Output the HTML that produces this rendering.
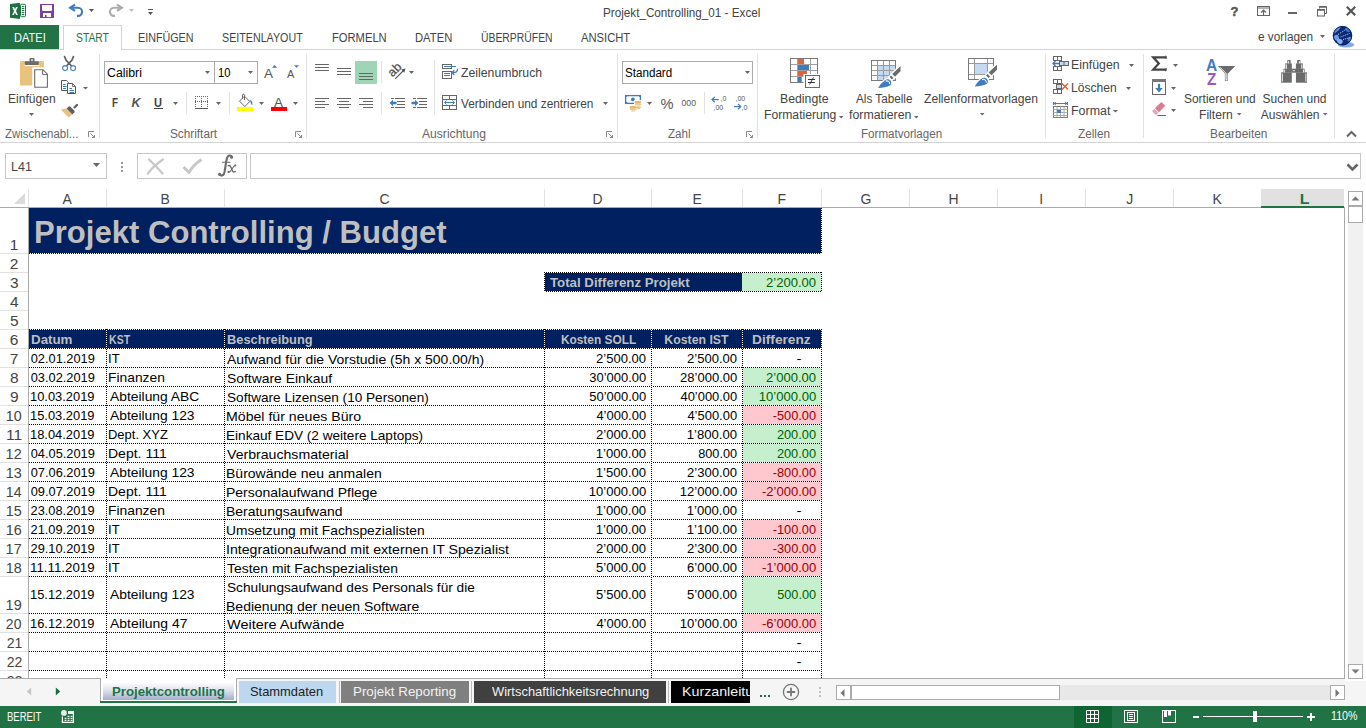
<!DOCTYPE html><html><head><meta charset="utf-8"><style>
html,body{margin:0;padding:0;width:1366px;height:728px;overflow:hidden;background:#fff;position:relative;font-family:"Liberation Sans",sans-serif;}
.t{position:absolute;white-space:nowrap;font-family:"Liberation Sans",sans-serif;}
svg{overflow:visible}
</style></head><body>
<div class="t" style="left:603.06px;top:7.00px;font-size:12px;line-height:12px;color:#444;transform:scaleX(0.9748);transform-origin:left 0;">Projekt_Controlling_01 - Excel</div>
<div style="position:absolute;left:0px;top:25px;width:59px;height:25px;background:#217346"></div>
<div class="t" style="left:13.72px;top:32.00px;font-size:12px;line-height:12px;color:#fff;transform:scaleX(0.9211);transform-origin:left 0;">DATEI</div>
<div style="position:absolute;left:63px;top:25px;width:59px;height:25px;box-sizing:border-box;border:1px solid #d4d4d4;border-bottom:none;background:#fff;z-index:2"></div>
<div class="t" style="left:75.64px;top:32.00px;font-size:12px;line-height:12px;color:#217346;transform:scaleX(0.8600);transform-origin:left 0;z-index:3">START</div>
<div class="t" style="left:137.64px;top:32.00px;font-size:12px;line-height:12px;color:#444;transform:scaleX(0.8949);transform-origin:left 0;">EINFÜGEN</div>
<div class="t" style="left:221.52px;top:32.00px;font-size:12px;line-height:12px;color:#444;transform:scaleX(0.8919);transform-origin:left 0;">SEITENLAYOUT</div>
<div class="t" style="left:331.51px;top:32.00px;font-size:12px;line-height:12px;color:#444;transform:scaleX(0.9320);transform-origin:left 0;">FORMELN</div>
<div class="t" style="left:414.60px;top:32.00px;font-size:12px;line-height:12px;color:#444;transform:scaleX(0.9362);transform-origin:left 0;">DATEN</div>
<div class="t" style="left:480.62px;top:32.00px;font-size:12px;line-height:12px;color:#444;transform:scaleX(0.8655);transform-origin:left 0;">ÜBERPRÜFEN</div>
<div class="t" style="left:581.00px;top:32.00px;font-size:12px;line-height:12px;color:#444;transform:scaleX(0.9344);transform-origin:left 0;">ANSICHT</div>
<div class="t" style="left:1257.53px;top:31.00px;font-size:12px;line-height:12px;color:#444;transform:scaleX(0.9847);transform-origin:left 0;">e vorlagen</div>
<div style="position:absolute;left:0px;top:49px;width:1366px;height:1px;background:#d4d4d4;z-index:1"></div>
<div style="position:absolute;left:0px;top:142px;width:1366px;height:1px;background:#d4d4d4"></div>
<div style="position:absolute;left:99px;top:54px;width:1px;height:84px;background:#e1e1e1"></div>
<div style="position:absolute;left:306px;top:54px;width:1px;height:84px;background:#e1e1e1"></div>
<div style="position:absolute;left:617px;top:54px;width:1px;height:84px;background:#e1e1e1"></div>
<div style="position:absolute;left:757px;top:54px;width:1px;height:84px;background:#e1e1e1"></div>
<div style="position:absolute;left:1045px;top:54px;width:1px;height:84px;background:#e1e1e1"></div>
<div style="position:absolute;left:1143px;top:54px;width:1px;height:84px;background:#e1e1e1"></div>
<div style="position:absolute;left:1334px;top:54px;width:1px;height:84px;background:#e1e1e1"></div>
<div class="t" style="left:4.66px;top:128.00px;font-size:12px;line-height:12px;color:#666;transform:scaleX(0.9562);transform-origin:left 0;">Zwischenabl...</div>
<div class="t" style="left:170.47px;top:128.00px;font-size:12px;line-height:12px;color:#666;transform:scaleX(0.9819);transform-origin:left 0;">Schriftart</div>
<div class="t" style="left:421.80px;top:128.00px;font-size:12px;line-height:12px;color:#666;transform:scaleX(1.0089);transform-origin:left 0;">Ausrichtung</div>
<div class="t" style="left:667.65px;top:128.00px;font-size:12px;line-height:12px;color:#666;transform:scaleX(0.9704);transform-origin:left 0;">Zahl</div>
<div class="t" style="left:860.57px;top:128.00px;font-size:12px;line-height:12px;color:#666;transform:scaleX(0.9657);transform-origin:left 0;">Formatvorlagen</div>
<div class="t" style="left:1078.35px;top:128.00px;font-size:12px;line-height:12px;color:#666;transform:scaleX(0.9804);transform-origin:left 0;">Zellen</div>
<div class="t" style="left:1210.05px;top:128.00px;font-size:12px;line-height:12px;color:#666;transform:scaleX(0.9886);transform-origin:left 0;">Bearbeiten</div>
<div class="t" style="left:7.53px;top:93.00px;font-size:12px;line-height:12px;color:#444;transform:scaleX(1.0074);transform-origin:left 0;">Einfügen</div>
<div class="t" style="left:460.63px;top:67.00px;font-size:12px;line-height:12px;color:#444;transform:scaleX(1.0217);transform-origin:left 0;">Zeilenumbruch</div>
<div class="t" style="left:461.00px;top:98.00px;font-size:12px;line-height:12px;color:#444;transform:scaleX(0.9874);transform-origin:left 0;">Verbinden und zentrieren</div>
<div class="t" style="left:780.42px;top:93.00px;font-size:12px;line-height:12px;color:#444;transform:scaleX(1.0240);transform-origin:left 0;">Bedingte</div>
<div class="t" style="left:763.73px;top:109.00px;font-size:12px;line-height:12px;color:#444;transform:scaleX(1.0135);transform-origin:left 0;">Formatierung</div>
<div class="t" style="left:856.00px;top:93.00px;font-size:12px;line-height:12px;color:#444;transform:scaleX(0.9773);transform-origin:left 0;">Als Tabelle</div>
<div class="t" style="left:848.88px;top:109.00px;font-size:12px;line-height:12px;color:#444;transform:scaleX(1.0281);transform-origin:left 0;">formatieren</div>
<div class="t" style="left:924.14px;top:93.00px;font-size:12px;line-height:12px;color:#444;transform:scaleX(1.0120);transform-origin:left 0;">Zellenformatvorlagen</div>
<div class="t" style="left:1071.02px;top:59.00px;font-size:12px;line-height:12px;color:#444;transform:scaleX(1.0250);transform-origin:left 0;">Einfügen</div>
<div class="t" style="left:1071.03px;top:82.00px;font-size:12px;line-height:12px;color:#444;transform:scaleX(1.0073);transform-origin:left 0;">Löschen</div>
<div class="t" style="left:1071.00px;top:105.00px;font-size:12px;line-height:12px;color:#444;transform:scaleX(1.0373);transform-origin:left 0;">Format</div>
<div class="t" style="left:1184.46px;top:93.00px;font-size:12px;line-height:12px;color:#444;transform:scaleX(0.9958);transform-origin:left 0;">Sortieren und</div>
<div class="t" style="left:1199.03px;top:109.00px;font-size:12px;line-height:12px;color:#444;transform:scaleX(1.0120);transform-origin:left 0;">Filtern</div>
<div class="t" style="left:1262.46px;top:93.00px;font-size:12px;line-height:12px;color:#444;">Suchen und</div>
<div class="t" style="left:1260.80px;top:109.00px;font-size:12px;line-height:12px;color:#444;">Auswählen</div>
<div style="position:absolute;left:104px;top:61px;width:111px;height:23px;box-sizing:border-box;border:1px solid #ababab;background:#fff"></div>
<div style="position:absolute;left:214px;top:61px;width:44px;height:23px;box-sizing:border-box;border:1px solid #ababab;background:#fff"></div>
<div class="t" style="left:106.78px;top:67.00px;font-size:12px;line-height:12px;color:#000;transform:scaleX(1.0252);transform-origin:left 0;">Calibri</div>
<div class="t" style="left:217.96px;top:67.00px;font-size:12px;line-height:12px;color:#000;transform:scaleX(0.9333);transform-origin:left 0;">10</div>
<div style="position:absolute;left:622px;top:61px;width:131px;height:23px;box-sizing:border-box;border:1px solid #ababab;background:#fff"></div>
<div class="t" style="left:624.88px;top:67.00px;font-size:12px;line-height:12px;color:#000;transform:scaleX(0.9692);transform-origin:left 0;">Standard</div>
<div style="position:absolute;left:5px;top:153px;width:102px;height:26px;box-sizing:border-box;border:1px solid #c6c6c6;background:#fff"></div>
<div class="t" style="left:11.30px;top:161.00px;font-size:12px;line-height:12px;color:#444;transform:scaleX(1.0444);transform-origin:left 0;">L41</div>
<div style="position:absolute;left:137px;top:153px;width:110px;height:26px;box-sizing:border-box;border:1px solid #c6c6c6;background:#fff"></div>
<div style="position:absolute;left:250px;top:153px;width:111px;height:26px;box-sizing:border-box;border:1px solid #c6c6c6;background:#fff;width:1111px"></div>
<div style="position:absolute;left:1261px;top:189px;width:83px;height:18px;background:#e1e1e1"></div>
<div class="t" style="left:62.35px;top:191.00px;font-size:15.5px;line-height:15.5px;color:#444;transform:scaleX(0.9000);transform-origin:5.15px 0;">A</div>
<div style="position:absolute;left:106px;top:189px;width:1px;height:18px;background:#e1e1e1"></div>
<div class="t" style="left:160.11px;top:191.00px;font-size:15.5px;line-height:15.5px;color:#444;transform:scaleX(0.9000);transform-origin:5.39px 0;">B</div>
<div style="position:absolute;left:224px;top:189px;width:1px;height:18px;background:#e1e1e1"></div>
<div class="t" style="left:378.80px;top:191.00px;font-size:15.5px;line-height:15.5px;color:#444;transform:scaleX(0.9000);transform-origin:5.70px 0;">C</div>
<div style="position:absolute;left:544px;top:189px;width:1px;height:18px;background:#e1e1e1"></div>
<div class="t" style="left:592.15px;top:191.00px;font-size:15.5px;line-height:15.5px;color:#444;transform:scaleX(0.9000);transform-origin:5.85px 0;">D</div>
<div style="position:absolute;left:651px;top:189px;width:1px;height:18px;background:#e1e1e1"></div>
<div class="t" style="left:691.54px;top:191.00px;font-size:15.5px;line-height:15.5px;color:#444;transform:scaleX(0.9000);transform-origin:5.46px 0;">E</div>
<div style="position:absolute;left:742px;top:189px;width:1px;height:18px;background:#e1e1e1"></div>
<div class="t" style="left:776.92px;top:191.00px;font-size:15.5px;line-height:15.5px;color:#444;transform:scaleX(0.9000);transform-origin:5.08px 0;">F</div>
<div style="position:absolute;left:821px;top:189px;width:1px;height:18px;background:#e1e1e1"></div>
<div class="t" style="left:859.65px;top:191.00px;font-size:15.5px;line-height:15.5px;color:#444;transform:scaleX(0.9000);transform-origin:5.85px 0;">G</div>
<div style="position:absolute;left:909px;top:189px;width:1px;height:18px;background:#e1e1e1"></div>
<div class="t" style="left:947.88px;top:191.00px;font-size:15.5px;line-height:15.5px;color:#444;transform:scaleX(0.9000);transform-origin:5.62px 0;">H</div>
<div style="position:absolute;left:997px;top:189px;width:1px;height:18px;background:#e1e1e1"></div>
<div class="t" style="left:1039.33px;top:191.00px;font-size:15.5px;line-height:15.5px;color:#444;transform:scaleX(0.9000);transform-origin:2.17px 0;">I</div>
<div style="position:absolute;left:1085px;top:189px;width:1px;height:18px;background:#e1e1e1"></div>
<div class="t" style="left:1126.05px;top:191.00px;font-size:15.5px;line-height:15.5px;color:#444;transform:scaleX(0.9000);transform-origin:3.45px 0;">J</div>
<div style="position:absolute;left:1173px;top:189px;width:1px;height:18px;background:#e1e1e1"></div>
<div class="t" style="left:1211.77px;top:191.00px;font-size:15.5px;line-height:15.5px;color:#444;transform:scaleX(0.9000);transform-origin:5.74px 0;">K</div>
<div style="position:absolute;left:1261px;top:189px;width:1px;height:18px;background:#e1e1e1"></div>
<div class="t" style="left:1300.46px;top:191.00px;font-size:15.5px;line-height:15.5px;color:#217346;font-weight:bold;transform:scaleX(1.0298);transform-origin:5.04px 0;">L</div>
<div style="position:absolute;left:0px;top:207px;width:1344px;height:1px;background:#ababab"></div>
<div style="position:absolute;left:1261px;top:206px;width:83px;height:2px;background:#217346"></div>
<svg style="position:absolute;left:14px;top:193px;" width="12" height="11" viewBox="0 0 12 11"><path d="M11 0 L11 11 L0 11 Z" fill="#dadada"/></svg>
<div style="position:absolute;left:28px;top:189px;width:1px;height:18px;background:#e1e1e1"></div>
<div style="position:absolute;left:28px;top:207px;width:1px;height:471px;background:#ababab"></div>
<div class="t" style="left:9.67px;top:237.00px;font-size:15.5px;line-height:15.5px;color:#444;">1</div>
<div style="position:absolute;left:0px;top:253px;width:28px;height:1px;background:#e1e1e1"></div>
<div class="t" style="left:9.86px;top:256.00px;font-size:15.5px;line-height:15.5px;color:#444;">2</div>
<div style="position:absolute;left:0px;top:272px;width:28px;height:1px;background:#e1e1e1"></div>
<div class="t" style="left:9.94px;top:275.00px;font-size:15.5px;line-height:15.5px;color:#444;">3</div>
<div style="position:absolute;left:0px;top:291px;width:28px;height:1px;background:#e1e1e1"></div>
<div class="t" style="left:9.94px;top:294.00px;font-size:15.5px;line-height:15.5px;color:#444;">4</div>
<div style="position:absolute;left:0px;top:310px;width:28px;height:1px;background:#e1e1e1"></div>
<div class="t" style="left:9.90px;top:313.00px;font-size:15.5px;line-height:15.5px;color:#444;">5</div>
<div style="position:absolute;left:0px;top:329px;width:28px;height:1px;background:#e1e1e1"></div>
<div class="t" style="left:9.82px;top:332.00px;font-size:15.5px;line-height:15.5px;color:#444;">6</div>
<div style="position:absolute;left:0px;top:348px;width:28px;height:1px;background:#e1e1e1"></div>
<div class="t" style="left:9.86px;top:351.00px;font-size:15.5px;line-height:15.5px;color:#444;">7</div>
<div style="position:absolute;left:0px;top:367px;width:28px;height:1px;background:#e1e1e1"></div>
<div class="t" style="left:9.90px;top:370.00px;font-size:15.5px;line-height:15.5px;color:#444;">8</div>
<div style="position:absolute;left:0px;top:386px;width:28px;height:1px;background:#e1e1e1"></div>
<div class="t" style="left:9.90px;top:389.00px;font-size:15.5px;line-height:15.5px;color:#444;">9</div>
<div style="position:absolute;left:0px;top:405px;width:28px;height:1px;background:#e1e1e1"></div>
<div class="t" style="left:5.29px;top:408.00px;font-size:15.5px;line-height:15.5px;color:#444;transform:scaleX(0.9226);transform-origin:8.91px 0;">10</div>
<div style="position:absolute;left:0px;top:424px;width:28px;height:1px;background:#e1e1e1"></div>
<div class="t" style="left:5.95px;top:427.00px;font-size:15.5px;line-height:15.5px;color:#444;transform:scaleX(1.0083);transform-origin:8.25px 0;">11</div>
<div style="position:absolute;left:0px;top:443px;width:28px;height:1px;background:#e1e1e1"></div>
<div class="t" style="left:5.36px;top:446.00px;font-size:15.5px;line-height:15.5px;color:#444;transform:scaleX(0.9319);transform-origin:8.84px 0;">12</div>
<div style="position:absolute;left:0px;top:462px;width:28px;height:1px;background:#e1e1e1"></div>
<div class="t" style="left:5.33px;top:465.00px;font-size:15.5px;line-height:15.5px;color:#444;transform:scaleX(0.9272);transform-origin:8.87px 0;">13</div>
<div style="position:absolute;left:0px;top:481px;width:28px;height:1px;background:#e1e1e1"></div>
<div class="t" style="left:5.21px;top:484.00px;font-size:15.5px;line-height:15.5px;color:#444;transform:scaleX(0.9134);transform-origin:8.99px 0;">14</div>
<div style="position:absolute;left:0px;top:500px;width:28px;height:1px;background:#e1e1e1"></div>
<div class="t" style="left:5.33px;top:503.00px;font-size:15.5px;line-height:15.5px;color:#444;transform:scaleX(0.9272);transform-origin:8.87px 0;">15</div>
<div style="position:absolute;left:0px;top:519px;width:28px;height:1px;background:#e1e1e1"></div>
<div class="t" style="left:5.33px;top:522.00px;font-size:15.5px;line-height:15.5px;color:#444;transform:scaleX(0.9272);transform-origin:8.87px 0;">16</div>
<div style="position:absolute;left:0px;top:538px;width:28px;height:1px;background:#e1e1e1"></div>
<div class="t" style="left:5.36px;top:541.00px;font-size:15.5px;line-height:15.5px;color:#444;transform:scaleX(0.9319);transform-origin:8.84px 0;">17</div>
<div style="position:absolute;left:0px;top:557px;width:28px;height:1px;background:#e1e1e1"></div>
<div class="t" style="left:5.33px;top:560.00px;font-size:15.5px;line-height:15.5px;color:#444;transform:scaleX(0.9272);transform-origin:8.87px 0;">18</div>
<div style="position:absolute;left:0px;top:576px;width:28px;height:1px;background:#e1e1e1"></div>
<div class="t" style="left:5.36px;top:597.00px;font-size:15.5px;line-height:15.5px;color:#444;transform:scaleX(0.9319);transform-origin:8.84px 0;">19</div>
<div style="position:absolute;left:0px;top:613px;width:28px;height:1px;background:#e1e1e1"></div>
<div class="t" style="left:5.48px;top:616.00px;font-size:15.5px;line-height:15.5px;color:#444;transform:scaleX(0.9001);transform-origin:8.72px 0;">20</div>
<div style="position:absolute;left:0px;top:632px;width:28px;height:1px;background:#e1e1e1"></div>
<div class="t" style="left:5.56px;top:635.00px;font-size:15.5px;line-height:15.5px;color:#444;transform:scaleX(0.9089);transform-origin:8.64px 0;">21</div>
<div style="position:absolute;left:0px;top:651px;width:28px;height:1px;background:#e1e1e1"></div>
<div class="t" style="left:5.56px;top:654.00px;font-size:15.5px;line-height:15.5px;color:#444;transform:scaleX(0.9089);transform-origin:8.64px 0;">22</div>
<div style="position:absolute;left:0px;top:670px;width:28px;height:1px;background:#e1e1e1"></div>
<div class="t" style="left:5.52px;top:673.00px;font-size:15.5px;line-height:15.5px;color:#444;transform:scaleX(0.9045);transform-origin:8.68px 0;">23</div>
<div style="position:absolute;left:1344px;top:207px;width:1px;height:472px;background:#ababab"></div>
<div style="position:absolute;left:29px;top:208px;width:792px;height:45px;background:#002060"></div>
<div style="position:absolute;left:29px;top:253px;width:793px;height:1px;background:repeating-linear-gradient(to right,#000 0,#000 1px,#fff 1px,#fff 2px)"></div>
<div style="position:absolute;left:821px;top:208px;width:1px;height:46px;background:repeating-linear-gradient(to bottom,#000 0,#000 1px,#fff 1px,#fff 2px)"></div>
<div class="t" style="left:33.68px;top:217.00px;font-size:31.5px;line-height:31.5px;color:#bfbfbf;font-weight:bold;transform:scaleX(0.9864);transform-origin:left 0;">Projekt Controlling / Budget</div>
<div style="position:absolute;left:545px;top:273px;width:197px;height:18px;background:#002060"></div>
<div style="position:absolute;left:742px;top:273px;width:79px;height:18px;background:#c6efce"></div>
<div style="position:absolute;left:544px;top:272px;width:278px;height:1px;background:repeating-linear-gradient(to right,#000 0,#000 1px,#fff 1px,#fff 2px)"></div>
<div style="position:absolute;left:544px;top:291px;width:278px;height:1px;background:repeating-linear-gradient(to right,#000 0,#000 1px,#fff 1px,#fff 2px)"></div>
<div style="position:absolute;left:544px;top:272px;width:1px;height:20px;background:repeating-linear-gradient(to bottom,#000 0,#000 1px,#fff 1px,#fff 2px)"></div>
<div style="position:absolute;left:821px;top:272px;width:1px;height:20px;background:repeating-linear-gradient(to bottom,#000 0,#000 1px,#fff 1px,#fff 2px)"></div>
<div class="t" style="left:550.27px;top:277.00px;font-size:12.8px;line-height:12.8px;color:#bfbfbf;font-weight:bold;transform:scaleX(1.0352);transform-origin:left 0;">Total Differenz Projekt</div>
<div class="t" style="left:766.97px;width:49.11px;text-align:right;top:277.00px;font-size:12.8px;line-height:12.8px;color:#006100;transform:scaleX(1.0208);transform-origin:right 0;">2’200.00</div>
<div style="position:absolute;left:29px;top:330px;width:792px;height:18px;background:#002060"></div>
<div style="position:absolute;left:29px;top:329px;width:793px;height:1px;background:repeating-linear-gradient(to right,#000 0,#000 1px,#fff 1px,#fff 2px)"></div>
<div style="position:absolute;left:29px;top:348px;width:793px;height:1px;background:repeating-linear-gradient(to right,#000 0,#000 1px,#fff 1px,#fff 2px)"></div>
<div class="t" style="left:30.83px;top:334.00px;font-size:12.8px;line-height:12.8px;color:#bfbfbf;font-weight:bold;transform:scaleX(1.0417);transform-origin:left 0;">Datum</div>
<div class="t" style="left:109.01px;top:334.00px;font-size:12.8px;line-height:12.8px;color:#bfbfbf;font-weight:bold;transform:scaleX(0.8258);transform-origin:left 0;">KST</div>
<div class="t" style="left:226.57px;top:334.00px;font-size:12.8px;line-height:12.8px;color:#bfbfbf;font-weight:bold;transform:scaleX(1.0030);transform-origin:left 0;">Beschreibung</div>
<div class="t" style="left:557.60px;top:334.00px;font-size:12.8px;line-height:12.8px;color:#bfbfbf;font-weight:bold;transform:scaleX(0.9295);transform-origin:40.80px 0;">Kosten SOLL</div>
<div class="t" style="left:663.11px;top:334.00px;font-size:12.8px;line-height:12.8px;color:#bfbfbf;font-weight:bold;transform:scaleX(0.9603);transform-origin:33.79px 0;">Kosten IST</div>
<div class="t" style="left:754.47px;top:334.00px;font-size:12.8px;line-height:12.8px;color:#bfbfbf;font-weight:bold;transform:scaleX(1.0709);transform-origin:27.58px 0;">Differenz</div>
<div class="t" style="left:30.75px;top:353.00px;font-size:12.8px;line-height:12.8px;color:#000;">02.01.2019</div>
<div class="t" style="left:108.32px;top:353.00px;font-size:12.8px;line-height:12.8px;color:#000;transform:scaleX(1.0216);transform-origin:left 0;">IT</div>
<div class="t" style="left:227.30px;top:354.00px;font-size:12.8px;line-height:12.8px;color:#000;transform:scaleX(1.0919);transform-origin:left 0;">Aufwand für die Vorstudie (5h x 500.00/h)</div>
<div class="t" style="left:596.97px;width:49.11px;text-align:right;top:353.00px;font-size:12.8px;line-height:12.8px;color:#000;transform:scaleX(1.0208);transform-origin:right 0;">2’500.00</div>
<div class="t" style="left:687.87px;width:49.11px;text-align:right;top:353.00px;font-size:12.8px;line-height:12.8px;color:#000;transform:scaleX(1.0208);transform-origin:right 0;">2’500.00</div>
<div class="t" style="left:797.09px;top:353.00px;font-size:12.8px;line-height:12.8px;color:#000;transform:scaleX(1.1875);transform-origin:2.11px 0;">-</div>
<div style="position:absolute;left:743px;top:368px;width:78px;height:18px;background:#c6efce"></div>
<div class="t" style="left:30.75px;top:372.00px;font-size:12.8px;line-height:12.8px;color:#000;">03.02.2019</div>
<div class="t" style="left:108.39px;top:372.00px;font-size:12.8px;line-height:12.8px;color:#000;transform:scaleX(1.0810);transform-origin:left 0;">Finanzen</div>
<div class="t" style="left:226.67px;top:373.00px;font-size:12.8px;line-height:12.8px;color:#000;transform:scaleX(1.0853);transform-origin:left 0;">Software Einkauf</div>
<div class="t" style="left:589.86px;width:56.23px;text-align:right;top:372.00px;font-size:12.8px;line-height:12.8px;color:#000;transform:scaleX(1.0127);transform-origin:right 0;">30’000.00</div>
<div class="t" style="left:680.76px;width:56.23px;text-align:right;top:372.00px;font-size:12.8px;line-height:12.8px;color:#000;transform:scaleX(1.0163);transform-origin:right 0;">28’000.00</div>
<div class="t" style="left:766.97px;width:49.11px;text-align:right;top:372.00px;font-size:12.8px;line-height:12.8px;color:#006100;transform:scaleX(1.0208);transform-origin:right 0;">2’000.00</div>
<div style="position:absolute;left:743px;top:387px;width:78px;height:18px;background:#c6efce"></div>
<div class="t" style="left:30.23px;top:391.00px;font-size:12.8px;line-height:12.8px;color:#000;transform:scaleX(1.0075);transform-origin:left 0;">10.03.2019</div>
<div class="t" style="left:109.50px;top:391.00px;font-size:12.8px;line-height:12.8px;color:#000;transform:scaleX(1.0823);transform-origin:left 0;">Abteilung ABC</div>
<div class="t" style="left:226.69px;top:392.00px;font-size:12.8px;line-height:12.8px;color:#000;transform:scaleX(1.0622);transform-origin:left 0;">Software Lizensen (10 Personen)</div>
<div class="t" style="left:589.86px;width:56.23px;text-align:right;top:391.00px;font-size:12.8px;line-height:12.8px;color:#000;transform:scaleX(1.0139);transform-origin:right 0;">50’000.00</div>
<div class="t" style="left:680.76px;width:56.23px;text-align:right;top:391.00px;font-size:12.8px;line-height:12.8px;color:#000;transform:scaleX(1.0092);transform-origin:right 0;">40’000.00</div>
<div class="t" style="left:759.87px;width:56.23px;text-align:right;top:391.00px;font-size:12.8px;line-height:12.8px;color:#006100;transform:scaleX(1.0222);transform-origin:right 0;">10’000.00</div>
<div style="position:absolute;left:743px;top:406px;width:78px;height:18px;background:#ffc7ce"></div>
<div class="t" style="left:30.23px;top:410.00px;font-size:12.8px;line-height:12.8px;color:#000;transform:scaleX(1.0075);transform-origin:left 0;">15.03.2019</div>
<div class="t" style="left:109.50px;top:410.00px;font-size:12.8px;line-height:12.8px;color:#000;transform:scaleX(1.0802);transform-origin:left 0;">Abteilung 123</div>
<div class="t" style="left:226.17px;top:411.00px;font-size:12.8px;line-height:12.8px;color:#000;transform:scaleX(1.1040);transform-origin:left 0;">Möbel für neues Büro</div>
<div class="t" style="left:596.97px;width:49.11px;text-align:right;top:410.00px;font-size:12.8px;line-height:12.8px;color:#000;transform:scaleX(1.0127);transform-origin:right 0;">4’000.00</div>
<div class="t" style="left:687.87px;width:49.11px;text-align:right;top:410.00px;font-size:12.8px;line-height:12.8px;color:#000;transform:scaleX(1.0127);transform-origin:right 0;">4’500.00</div>
<div class="t" style="left:772.66px;width:43.41px;text-align:right;top:410.00px;font-size:12.8px;line-height:12.8px;color:#9c0006;">-500.00</div>
<div style="position:absolute;left:743px;top:425px;width:78px;height:18px;background:#c6efce"></div>
<div class="t" style="left:30.23px;top:429.00px;font-size:12.8px;line-height:12.8px;color:#000;transform:scaleX(1.0075);transform-origin:left 0;">18.04.2019</div>
<div class="t" style="left:108.46px;top:429.00px;font-size:12.8px;line-height:12.8px;color:#000;transform:scaleX(1.0139);transform-origin:left 0;">Dept. XYZ</div>
<div class="t" style="left:226.21px;top:430.00px;font-size:12.8px;line-height:12.8px;color:#000;transform:scaleX(1.0618);transform-origin:left 0;">Einkauf EDV (2 weitere Laptops)</div>
<div class="t" style="left:596.97px;width:49.11px;text-align:right;top:429.00px;font-size:12.8px;line-height:12.8px;color:#000;transform:scaleX(1.0208);transform-origin:right 0;">2’000.00</div>
<div class="t" style="left:687.87px;width:49.11px;text-align:right;top:429.00px;font-size:12.8px;line-height:12.8px;color:#000;transform:scaleX(1.0277);transform-origin:right 0;">1’800.00</div>
<div class="t" style="left:776.88px;width:39.15px;text-align:right;top:429.00px;font-size:12.8px;line-height:12.8px;color:#006100;">200.00</div>
<div style="position:absolute;left:743px;top:444px;width:78px;height:18px;background:#c6efce"></div>
<div class="t" style="left:30.75px;top:448.00px;font-size:12.8px;line-height:12.8px;color:#000;">04.05.2019</div>
<div class="t" style="left:108.38px;top:448.00px;font-size:12.8px;line-height:12.8px;color:#000;transform:scaleX(1.0949);transform-origin:left 0;">Dept. 111</div>
<div class="t" style="left:227.30px;top:449.00px;font-size:12.8px;line-height:12.8px;color:#000;transform:scaleX(1.1032);transform-origin:left 0;">Verbrauchsmaterial</div>
<div class="t" style="left:596.97px;width:49.11px;text-align:right;top:448.00px;font-size:12.8px;line-height:12.8px;color:#000;transform:scaleX(1.0277);transform-origin:right 0;">1’000.00</div>
<div class="t" style="left:697.78px;width:39.15px;text-align:right;top:448.00px;font-size:12.8px;line-height:12.8px;color:#000;transform:scaleX(0.9946);transform-origin:right 0;">800.00</div>
<div class="t" style="left:776.88px;width:39.15px;text-align:right;top:448.00px;font-size:12.8px;line-height:12.8px;color:#006100;">200.00</div>
<div style="position:absolute;left:743px;top:463px;width:78px;height:18px;background:#ffc7ce"></div>
<div class="t" style="left:30.75px;top:467.00px;font-size:12.8px;line-height:12.8px;color:#000;">07.06.2019</div>
<div class="t" style="left:109.50px;top:467.00px;font-size:12.8px;line-height:12.8px;color:#000;transform:scaleX(1.0802);transform-origin:left 0;">Abteilung 123</div>
<div class="t" style="left:226.18px;top:468.00px;font-size:12.8px;line-height:12.8px;color:#000;transform:scaleX(1.0943);transform-origin:left 0;">Bürowände neu anmalen</div>
<div class="t" style="left:596.97px;width:49.11px;text-align:right;top:467.00px;font-size:12.8px;line-height:12.8px;color:#000;transform:scaleX(1.0277);transform-origin:right 0;">1’500.00</div>
<div class="t" style="left:687.87px;width:49.11px;text-align:right;top:467.00px;font-size:12.8px;line-height:12.8px;color:#000;transform:scaleX(1.0208);transform-origin:right 0;">2’300.00</div>
<div class="t" style="left:772.66px;width:43.41px;text-align:right;top:467.00px;font-size:12.8px;line-height:12.8px;color:#9c0006;">-800.00</div>
<div style="position:absolute;left:743px;top:482px;width:78px;height:18px;background:#ffc7ce"></div>
<div class="t" style="left:30.75px;top:486.00px;font-size:12.8px;line-height:12.8px;color:#000;">09.07.2019</div>
<div class="t" style="left:108.38px;top:486.00px;font-size:12.8px;line-height:12.8px;color:#000;transform:scaleX(1.0949);transform-origin:left 0;">Dept. 111</div>
<div class="t" style="left:226.18px;top:487.00px;font-size:12.8px;line-height:12.8px;color:#000;transform:scaleX(1.0903);transform-origin:left 0;">Personalaufwand Pflege</div>
<div class="t" style="left:589.87px;width:56.23px;text-align:right;top:486.00px;font-size:12.8px;line-height:12.8px;color:#000;transform:scaleX(1.0222);transform-origin:right 0;">10’000.00</div>
<div class="t" style="left:680.77px;width:56.23px;text-align:right;top:486.00px;font-size:12.8px;line-height:12.8px;color:#000;transform:scaleX(1.0222);transform-origin:right 0;">12’000.00</div>
<div class="t" style="left:762.68px;width:53.38px;text-align:right;top:486.00px;font-size:12.8px;line-height:12.8px;color:#9c0006;transform:scaleX(1.0207);transform-origin:right 0;">-2’000.00</div>
<div class="t" style="left:30.56px;top:505.00px;font-size:12.8px;line-height:12.8px;color:#000;">23.08.2019</div>
<div class="t" style="left:108.39px;top:505.00px;font-size:12.8px;line-height:12.8px;color:#000;transform:scaleX(1.0810);transform-origin:left 0;">Finanzen</div>
<div class="t" style="left:226.18px;top:506.00px;font-size:12.8px;line-height:12.8px;color:#000;transform:scaleX(1.0909);transform-origin:left 0;">Beratungsaufwand</div>
<div class="t" style="left:596.97px;width:49.11px;text-align:right;top:505.00px;font-size:12.8px;line-height:12.8px;color:#000;transform:scaleX(1.0277);transform-origin:right 0;">1’000.00</div>
<div class="t" style="left:687.87px;width:49.11px;text-align:right;top:505.00px;font-size:12.8px;line-height:12.8px;color:#000;transform:scaleX(1.0277);transform-origin:right 0;">1’000.00</div>
<div class="t" style="left:797.09px;top:505.00px;font-size:12.8px;line-height:12.8px;color:#000;transform:scaleX(1.1875);transform-origin:2.11px 0;">-</div>
<div style="position:absolute;left:743px;top:520px;width:78px;height:18px;background:#ffc7ce"></div>
<div class="t" style="left:30.56px;top:524.00px;font-size:12.8px;line-height:12.8px;color:#000;">21.09.2019</div>
<div class="t" style="left:108.32px;top:524.00px;font-size:12.8px;line-height:12.8px;color:#000;transform:scaleX(1.0216);transform-origin:left 0;">IT</div>
<div class="t" style="left:226.26px;top:525.00px;font-size:12.8px;line-height:12.8px;color:#000;transform:scaleX(1.0782);transform-origin:left 0;">Umsetzung mit Fachspezialisten</div>
<div class="t" style="left:596.97px;width:49.11px;text-align:right;top:524.00px;font-size:12.8px;line-height:12.8px;color:#000;transform:scaleX(1.0277);transform-origin:right 0;">1’000.00</div>
<div class="t" style="left:687.87px;width:49.11px;text-align:right;top:524.00px;font-size:12.8px;line-height:12.8px;color:#000;transform:scaleX(1.0277);transform-origin:right 0;">1’100.00</div>
<div class="t" style="left:772.66px;width:43.41px;text-align:right;top:524.00px;font-size:12.8px;line-height:12.8px;color:#9c0006;">-100.00</div>
<div style="position:absolute;left:743px;top:539px;width:78px;height:18px;background:#ffc7ce"></div>
<div class="t" style="left:30.56px;top:543.00px;font-size:12.8px;line-height:12.8px;color:#000;">29.10.2019</div>
<div class="t" style="left:108.32px;top:543.00px;font-size:12.8px;line-height:12.8px;color:#000;transform:scaleX(1.0216);transform-origin:left 0;">IT</div>
<div class="t" style="left:226.03px;top:544.00px;font-size:12.8px;line-height:12.8px;color:#000;transform:scaleX(1.1063);transform-origin:left 0;">Integrationaufwand mit externen IT Spezialist</div>
<div class="t" style="left:596.97px;width:49.11px;text-align:right;top:543.00px;font-size:12.8px;line-height:12.8px;color:#000;transform:scaleX(1.0208);transform-origin:right 0;">2’000.00</div>
<div class="t" style="left:687.87px;width:49.11px;text-align:right;top:543.00px;font-size:12.8px;line-height:12.8px;color:#000;transform:scaleX(1.0208);transform-origin:right 0;">2’300.00</div>
<div class="t" style="left:772.66px;width:43.41px;text-align:right;top:543.00px;font-size:12.8px;line-height:12.8px;color:#9c0006;">-300.00</div>
<div style="position:absolute;left:743px;top:558px;width:78px;height:18px;background:#ffc7ce"></div>
<div class="t" style="left:30.20px;top:562.00px;font-size:12.8px;line-height:12.8px;color:#000;transform:scaleX(1.0395);transform-origin:left 0;">11.11.2019</div>
<div class="t" style="left:108.32px;top:562.00px;font-size:12.8px;line-height:12.8px;color:#000;transform:scaleX(1.0216);transform-origin:left 0;">IT</div>
<div class="t" style="left:227.02px;top:563.00px;font-size:12.8px;line-height:12.8px;color:#000;transform:scaleX(1.0880);transform-origin:left 0;">Testen mit Fachspezialisten</div>
<div class="t" style="left:596.97px;width:49.11px;text-align:right;top:562.00px;font-size:12.8px;line-height:12.8px;color:#000;transform:scaleX(1.0181);transform-origin:right 0;">5’000.00</div>
<div class="t" style="left:687.87px;width:49.11px;text-align:right;top:562.00px;font-size:12.8px;line-height:12.8px;color:#000;transform:scaleX(1.0208);transform-origin:right 0;">6’000.00</div>
<div class="t" style="left:762.68px;width:53.38px;text-align:right;top:562.00px;font-size:12.8px;line-height:12.8px;color:#9c0006;transform:scaleX(1.0207);transform-origin:right 0;">-1’000.00</div>
<div style="position:absolute;left:743px;top:577px;width:78px;height:36px;background:#c6efce"></div>
<div class="t" style="left:30.23px;top:589.00px;font-size:12.8px;line-height:12.8px;color:#000;transform:scaleX(1.0075);transform-origin:left 0;">15.12.2019</div>
<div class="t" style="left:109.50px;top:589.00px;font-size:12.8px;line-height:12.8px;color:#000;transform:scaleX(1.0802);transform-origin:left 0;">Abteilung 123</div>
<div class="t" style="left:596.97px;width:49.11px;text-align:right;top:589.00px;font-size:12.8px;line-height:12.8px;color:#000;transform:scaleX(1.0181);transform-origin:right 0;">5’500.00</div>
<div class="t" style="left:687.87px;width:49.11px;text-align:right;top:589.00px;font-size:12.8px;line-height:12.8px;color:#000;transform:scaleX(1.0181);transform-origin:right 0;">5’000.00</div>
<div class="t" style="left:776.88px;width:39.15px;text-align:right;top:589.00px;font-size:12.8px;line-height:12.8px;color:#006100;transform:scaleX(0.9946);transform-origin:right 0;">500.00</div>
<div style="position:absolute;left:743px;top:614px;width:78px;height:18px;background:#ffc7ce"></div>
<div class="t" style="left:30.23px;top:618.00px;font-size:12.8px;line-height:12.8px;color:#000;transform:scaleX(1.0075);transform-origin:left 0;">16.12.2019</div>
<div class="t" style="left:109.50px;top:618.00px;font-size:12.8px;line-height:12.8px;color:#000;transform:scaleX(1.0879);transform-origin:left 0;">Abteilung 47</div>
<div class="t" style="left:227.30px;top:619.00px;font-size:12.8px;line-height:12.8px;color:#000;transform:scaleX(1.1319);transform-origin:left 0;">Weitere Aufwände</div>
<div class="t" style="left:596.97px;width:49.11px;text-align:right;top:618.00px;font-size:12.8px;line-height:12.8px;color:#000;transform:scaleX(1.0127);transform-origin:right 0;">4’000.00</div>
<div class="t" style="left:680.77px;width:56.23px;text-align:right;top:618.00px;font-size:12.8px;line-height:12.8px;color:#000;transform:scaleX(1.0222);transform-origin:right 0;">10’000.00</div>
<div class="t" style="left:762.68px;width:53.38px;text-align:right;top:618.00px;font-size:12.8px;line-height:12.8px;color:#9c0006;transform:scaleX(1.0207);transform-origin:right 0;">-6’000.00</div>
<div class="t" style="left:226.68px;top:582.00px;font-size:12.8px;line-height:12.8px;color:#000;transform:scaleX(1.0687);transform-origin:left 0;">Schulungsaufwand des Personals für die</div>
<div class="t" style="left:226.18px;top:601.00px;font-size:12.8px;line-height:12.8px;color:#000;transform:scaleX(1.0954);transform-origin:left 0;">Bedienung der neuen Software</div>
<div class="t" style="left:797.09px;top:637.00px;font-size:12.8px;line-height:12.8px;color:#000;transform:scaleX(1.1875);transform-origin:2.11px 0;">-</div>
<div class="t" style="left:797.09px;top:656.00px;font-size:12.8px;line-height:12.8px;color:#000;transform:scaleX(1.1875);transform-origin:2.11px 0;">-</div>
<div style="position:absolute;left:29px;top:367px;width:793px;height:1px;background:repeating-linear-gradient(to right,#000 0,#000 1px,#fff 1px,#fff 2px)"></div>
<div style="position:absolute;left:29px;top:386px;width:793px;height:1px;background:repeating-linear-gradient(to right,#000 0,#000 1px,#fff 1px,#fff 2px)"></div>
<div style="position:absolute;left:29px;top:405px;width:793px;height:1px;background:repeating-linear-gradient(to right,#000 0,#000 1px,#fff 1px,#fff 2px)"></div>
<div style="position:absolute;left:29px;top:424px;width:793px;height:1px;background:repeating-linear-gradient(to right,#000 0,#000 1px,#fff 1px,#fff 2px)"></div>
<div style="position:absolute;left:29px;top:443px;width:793px;height:1px;background:repeating-linear-gradient(to right,#000 0,#000 1px,#fff 1px,#fff 2px)"></div>
<div style="position:absolute;left:29px;top:462px;width:793px;height:1px;background:repeating-linear-gradient(to right,#000 0,#000 1px,#fff 1px,#fff 2px)"></div>
<div style="position:absolute;left:29px;top:481px;width:793px;height:1px;background:repeating-linear-gradient(to right,#000 0,#000 1px,#fff 1px,#fff 2px)"></div>
<div style="position:absolute;left:29px;top:500px;width:793px;height:1px;background:repeating-linear-gradient(to right,#000 0,#000 1px,#fff 1px,#fff 2px)"></div>
<div style="position:absolute;left:29px;top:519px;width:793px;height:1px;background:repeating-linear-gradient(to right,#000 0,#000 1px,#fff 1px,#fff 2px)"></div>
<div style="position:absolute;left:29px;top:538px;width:793px;height:1px;background:repeating-linear-gradient(to right,#000 0,#000 1px,#fff 1px,#fff 2px)"></div>
<div style="position:absolute;left:29px;top:557px;width:793px;height:1px;background:repeating-linear-gradient(to right,#000 0,#000 1px,#fff 1px,#fff 2px)"></div>
<div style="position:absolute;left:29px;top:576px;width:793px;height:1px;background:repeating-linear-gradient(to right,#000 0,#000 1px,#fff 1px,#fff 2px)"></div>
<div style="position:absolute;left:29px;top:613px;width:793px;height:1px;background:repeating-linear-gradient(to right,#000 0,#000 1px,#fff 1px,#fff 2px)"></div>
<div style="position:absolute;left:29px;top:632px;width:793px;height:1px;background:repeating-linear-gradient(to right,#000 0,#000 1px,#fff 1px,#fff 2px)"></div>
<div style="position:absolute;left:29px;top:651px;width:793px;height:1px;background:repeating-linear-gradient(to right,#000 0,#000 1px,#fff 1px,#fff 2px)"></div>
<div style="position:absolute;left:29px;top:670px;width:793px;height:1px;background:repeating-linear-gradient(to right,#000 0,#000 1px,#fff 1px,#fff 2px)"></div>
<div style="position:absolute;left:106px;top:329px;width:1px;height:349px;background:repeating-linear-gradient(to bottom,#000 0,#000 1px,#fff 1px,#fff 2px)"></div>
<div style="position:absolute;left:224px;top:329px;width:1px;height:349px;background:repeating-linear-gradient(to bottom,#000 0,#000 1px,#fff 1px,#fff 2px)"></div>
<div style="position:absolute;left:544px;top:329px;width:1px;height:349px;background:repeating-linear-gradient(to bottom,#000 0,#000 1px,#fff 1px,#fff 2px)"></div>
<div style="position:absolute;left:651px;top:329px;width:1px;height:349px;background:repeating-linear-gradient(to bottom,#000 0,#000 1px,#fff 1px,#fff 2px)"></div>
<div style="position:absolute;left:742px;top:329px;width:1px;height:349px;background:repeating-linear-gradient(to bottom,#000 0,#000 1px,#fff 1px,#fff 2px)"></div>
<div style="position:absolute;left:821px;top:329px;width:1px;height:349px;background:repeating-linear-gradient(to bottom,#000 0,#000 1px,#fff 1px,#fff 2px)"></div>
<svg style="position:absolute;left:9px;top:2px;" width="18" height="18" viewBox="0 0 18 18"><path d="M1 2 L11 0.8 L11 17 L1 15.8 Z" fill="#1e7145"/><rect x="11.5" y="2.3" width="5" height="12.4" rx="1" fill="#fff" stroke="#1e7145" stroke-width="1"/><rect x="12.8" y="4" width="2.4" height="1.1" fill="#1e7145"/><rect x="12.8" y="6" width="2.4" height="1.1" fill="#1e7145"/><rect x="12.8" y="8" width="2.4" height="1.1" fill="#1e7145"/><rect x="12.8" y="10" width="2.4" height="1.1" fill="#1e7145"/><rect x="12.8" y="12" width="2.4" height="1.1" fill="#1e7145"/><rect x="11" y="4.2" width="1" height="0.8" fill="#1e7145"/><rect x="11" y="6.2" width="1" height="0.8" fill="#1e7145"/><rect x="11" y="8.2" width="1" height="0.8" fill="#1e7145"/><rect x="11" y="10.2" width="1" height="0.8" fill="#1e7145"/><rect x="11" y="12.2" width="1" height="0.8" fill="#1e7145"/><path d="M3.2 5 L5 5 L6 7.2 L7 5 L8.8 5 L7 8.9 L8.9 13 L7.1 13 L6 10.6 L4.9 13 L3.1 13 L5 8.9 Z" fill="#fff"/></svg>
<svg style="position:absolute;left:40px;top:4px;" width="14" height="14" viewBox="0 0 14 14"><path d="M0 0 H14 V14 H0 Z" fill="#80409f"/><path d="M2 1 H12 V5.8 Q12 6.9 11 6.9 H3 Q2 6.9 2 5.8 Z" fill="#fff"/><rect x="3" y="9" width="8" height="4" fill="#fff"/><rect x="5" y="11" width="1.6" height="2" fill="#80409f"/></svg>
<svg style="position:absolute;left:68px;top:3px;" width="16" height="14" viewBox="0 0 16 14"><path d="M7 1.6 L2.2 4.7 L7 7.8" fill="none" stroke="#3f7bbd" stroke-width="2.2" stroke-linejoin="miter"/><path d="M3 4.7 H10 A4.1 4.1 0 0 1 10 12.9 H9" fill="none" stroke="#3f7bbd" stroke-width="2.1"/></svg>
<svg style="position:absolute;left:89px;top:9px;" width="5" height="3" viewBox="0 0 5 3"><path d="M0 0 H5 L2.5 3 Z" fill="#555"/></svg>
<svg style="position:absolute;left:108px;top:3px;" width="16" height="14" viewBox="0 0 16 14"><path d="M9 1.6 L13.8 4.7 L9 7.8" fill="none" stroke="#ababab" stroke-width="2.2" stroke-linejoin="miter"/><path d="M13 4.7 H6 A4.1 4.1 0 0 0 6 12.9 H7" fill="none" stroke="#ababab" stroke-width="2.1"/></svg>
<svg style="position:absolute;left:129px;top:9px;" width="5" height="3" viewBox="0 0 5 3"><path d="M0 0 H5 L2.5 3 Z" fill="#c0c0c0"/></svg>
<div style="position:absolute;left:148px;top:9px;width:5px;height:1px;background:#555"></div>
<svg style="position:absolute;left:148px;top:12px;" width="5" height="3" viewBox="0 0 5 3"><path d="M0 0 H5 L2.5 3 Z" fill="#555"/></svg>
<svg style="position:absolute;left:1229px;top:5px;" width="12" height="12" viewBox="0 0 12 12"><text x="1.5" y="11" font-family="Liberation Sans" font-weight="bold" font-size="13" fill="#555" stroke="#555" stroke-width="0.4">?</text></svg>
<svg style="position:absolute;left:1257px;top:6px;" width="13" height="10" viewBox="0 0 13 10"><rect x="0.5" y="0.5" width="12" height="9" fill="none" stroke="#666"/><path d="M1 2 H12" stroke="#666"/><path d="M6.5 9.5 V4.5 M4 6.5 L6.5 4 L9 6.5" fill="none" stroke="#666" stroke-width="1.2"/></svg>
<div style="position:absolute;left:1288px;top:12px;width:9px;height:2px;background:#666"></div>
<svg style="position:absolute;left:1317px;top:6px;" width="11" height="11" viewBox="0 0 11 11"><path d="M2.5 2.5 V0.5 H9.5 V7.5 H7.5" fill="none" stroke="#666"/><path d="M2.5 1 H9" stroke="#666" stroke-width="1.5"/><rect x="0.5" y="3.5" width="7" height="6.5" fill="none" stroke="#666"/><path d="M0.5 4 H7.5" stroke="#666" stroke-width="1.5"/></svg>
<svg style="position:absolute;left:1346px;top:6px;" width="10" height="10" viewBox="0 0 10 10"><path d="M0.8 0.8 L9.2 9.2 M9.2 0.8 L0.8 9.2" stroke="#555" stroke-width="2.2"/></svg>
<svg style="position:absolute;left:1320px;top:35px;" width="5" height="3" viewBox="0 0 5 3"><path d="M0 0 H5 L2.5 3 Z" fill="#666"/></svg>
<svg style="position:absolute;left:1332px;top:25px;" width="24" height="24" viewBox="0 0 24 24"><ellipse cx="14" cy="19.8" rx="8.3" ry="2.8" fill="#7fa8f0"/><circle cx="10.5" cy="10.7" r="9.6" fill="#0c2a78"/><path d="M2.5 6 Q5 2 9 1.5 L7 5 Q4 7 2.5 9 Z" fill="#5f8fe0"/><path d="M1.5 12 Q3 9 6 10 Q8 13 6 16 Q3 16 1.5 12 Z" fill="#6f9ae8"/><path d="M5 14 Q9 13 11 16 Q10 19.5 7.5 19.5 Q4.5 17 5 14 Z" fill="#87adf2"/><path d="M13 3 Q17 2.5 19 6 Q17 8 14.5 6.5 Z" fill="#3d6bc8"/><path d="M16.5 12 Q19.5 11 19.8 13.5 Q18 17 15.5 16 Z" fill="#4a78d0"/><circle cx="10.5" cy="10.7" r="9.3" fill="none" stroke="#061a50" stroke-width="0.8"/><path d="M6 9.5 L15.5 3.5 M8.5 12 L17.5 8.5 M11 14.5 L18 12.8" stroke="#e6eeff" stroke-width="0.8" stroke-dasharray="1.2 1"/></svg>
<svg style="position:absolute;left:20px;top:57px;" width="30" height="32" viewBox="0 0 30 32"><rect x="0" y="4" width="24" height="24.6" rx="1.2" fill="#e9c27d"/><rect x="4.8" y="4.3" width="14" height="3.6" rx="0.8" fill="#6b6b6b"/><rect x="9.5" y="1" width="5" height="3.8" rx="1" fill="#6b6b6b"/><rect x="11.2" y="2.2" width="1.6" height="1.6" fill="#fff"/><rect x="4.5" y="8.1" width="15" height="1" fill="#fff"/><path d="M13.2 11.3 H23.6 L28.9 16.6 V31.7 H13.2 Z" fill="#fff" stroke="#fff" stroke-width="2"/><path d="M14.7 12.8 H23 L27.4 17.2 V30.2 H14.7 Z" fill="#fff" stroke="#6b6b6b" stroke-width="1.1"/><path d="M22.6 12.8 V17.6 H27.4" fill="none" stroke="#6b6b6b" stroke-width="1"/></svg>
<svg style="position:absolute;left:60px;top:55px;" width="18" height="16" viewBox="0 0 18 16"><path d="M4.5 1.5 Q5.5 5.5 9 8.2 L11.5 11 M13.5 1.5 Q12.5 5.5 9 8.2 L6.5 11" fill="none" stroke="#5f5f5f" stroke-width="1.7" stroke-linecap="round"/><circle cx="5.1" cy="13.1" r="2.5" fill="#fff" stroke="#4a7fc1" stroke-width="1.1"/><circle cx="13.1" cy="13.1" r="2.5" fill="#fff" stroke="#4a7fc1" stroke-width="1.1"/></svg>
<svg style="position:absolute;left:60px;top:79px;" width="17" height="16" viewBox="0 0 17 16"><path d="M1.5 1.5 H6.5 L8.5 3.5 V11.5 H1.5 Z" fill="#fff" stroke="#555" stroke-width="1"/><path d="M3 5.5 H5.5 M3 7.5 H6.5 M3 9.5 H6" stroke="#3f7bbd" stroke-width="1"/><path d="M7.5 4.5 H12.5 L15.5 7.5 V14.5 H7.5 Z" fill="#fff" stroke="#555" stroke-width="1"/><path d="M12.5 4.5 V7.5 H15.5" fill="none" stroke="#555" stroke-width="0.8"/><path d="M9.5 9.5 H12 M9.5 11.5 H14 M9.5 13.5 H14" stroke="#3f7bbd" stroke-width="1"/></svg>
<svg style="position:absolute;left:83px;top:86.5px;" width="5" height="2.5" viewBox="0 0 5 2.5"><path d="M0 0 H5 L2.5 2.5 Z" fill="#666"/></svg>
<svg style="position:absolute;left:60px;top:102px;" width="18" height="16" viewBox="0 0 18 16"><path d="M13.2 5.2 L16.4 2 Q17 1.6 17.5 2.1 L18 2.6 Q18.4 3.1 18 3.6 L14.8 6.8 Z" fill="#5f5f5f"/><path d="M8.8 4.6 Q9.5 4 10.2 4.6 L14.4 8.8 Q15 9.5 14.4 10.2 L12.2 12.4 L6.6 6.8 Z" fill="#5f5f5f"/><path d="M0.8 7.6 L6.2 6.6 L12 12.4 L9 15.2 Q8.2 15 7.6 14.4 Z" fill="#e9c27d"/></svg>
<svg style="position:absolute;left:29px;top:113px;" width="5" height="3" viewBox="0 0 5 3"><path d="M0 0 H5 L2.5 3 Z" fill="#666"/></svg>
<svg style="position:absolute;left:88px;top:131px;" width="8" height="8" viewBox="0 0 8 8"><path d="M0.5 6 V0.5 H6" fill="none" stroke="#8a8a8a"/><path d="M2.5 2.5 L6.5 6.5 M4 6.5 H6.5 V4" fill="none" stroke="#8a8a8a"/></svg>
<svg style="position:absolute;left:295px;top:131px;" width="8" height="8" viewBox="0 0 8 8"><path d="M0.5 6 V0.5 H6" fill="none" stroke="#8a8a8a"/><path d="M2.5 2.5 L6.5 6.5 M4 6.5 H6.5 V4" fill="none" stroke="#8a8a8a"/></svg>
<svg style="position:absolute;left:606px;top:131px;" width="8" height="8" viewBox="0 0 8 8"><path d="M0.5 6 V0.5 H6" fill="none" stroke="#8a8a8a"/><path d="M2.5 2.5 L6.5 6.5 M4 6.5 H6.5 V4" fill="none" stroke="#8a8a8a"/></svg>
<svg style="position:absolute;left:746px;top:131px;" width="8" height="8" viewBox="0 0 8 8"><path d="M0.5 6 V0.5 H6" fill="none" stroke="#8a8a8a"/><path d="M2.5 2.5 L6.5 6.5 M4 6.5 H6.5 V4" fill="none" stroke="#8a8a8a"/></svg>
<svg style="position:absolute;left:205px;top:71px;" width="5" height="3" viewBox="0 0 5 3"><path d="M0 0 H5 L2.5 3 Z" fill="#666"/></svg>
<svg style="position:absolute;left:248px;top:71px;" width="5" height="3" viewBox="0 0 5 3"><path d="M0 0 H5 L2.5 3 Z" fill="#666"/></svg>
<svg style="position:absolute;left:263px;top:64px;" width="16" height="15" viewBox="0 0 16 15"><text x="1" y="14" font-family="Liberation Sans" font-size="13.5" fill="#555">A</text><path d="M9 3.8 H14.2 L11.6 1 Z" fill="#3f7bbd"/></svg>
<svg style="position:absolute;left:286px;top:64px;" width="14" height="15" viewBox="0 0 14 15"><text x="1" y="14" font-family="Liberation Sans" font-size="11" fill="#555">A</text><path d="M8 1.2 H13 L10.5 3.8 Z" fill="#3f7bbd"/></svg>
<svg style="position:absolute;left:112px;top:97px;" width="8" height="11" viewBox="0 0 8 11"><text x="0" y="10" font-family="Liberation Sans" font-weight="bold" font-size="12.4" fill="#444" textLength="6" lengthAdjust="spacingAndGlyphs">F</text></svg>
<svg style="position:absolute;left:131px;top:97px;" width="11" height="11" viewBox="0 0 11 11"><text x="0.5" y="10" font-family="Liberation Sans" font-weight="bold" font-style="italic" font-size="12.4" fill="#555" textLength="9" lengthAdjust="spacingAndGlyphs">K</text></svg>
<svg style="position:absolute;left:154px;top:97px;" width="10" height="13" viewBox="0 0 10 13"><text x="0" y="10" font-family="Liberation Sans" font-weight="bold" font-size="12.4" fill="#444" textLength="8" lengthAdjust="spacingAndGlyphs">U</text><rect x="0" y="11" width="9" height="1" fill="#444"/></svg>
<svg style="position:absolute;left:173px;top:102px;" width="5" height="3" viewBox="0 0 5 3"><path d="M0 0 H5 L2.5 3 Z" fill="#666"/></svg>
<div style="position:absolute;left:186px;top:92px;width:1px;height:22px;background:#e1e1e1"></div>
<svg style="position:absolute;left:195px;top:96px;" width="14" height="13" viewBox="0 0 14 13"><g fill="#666"><rect x="0" y="0" width="1" height="1"/><rect x="0" y="5" width="1" height="1"/><rect x="2" y="0" width="1" height="1"/><rect x="2" y="5" width="1" height="1"/><rect x="4" y="0" width="1" height="1"/><rect x="4" y="5" width="1" height="1"/><rect x="6" y="0" width="1" height="1"/><rect x="6" y="5" width="1" height="1"/><rect x="8" y="0" width="1" height="1"/><rect x="8" y="5" width="1" height="1"/><rect x="10" y="0" width="1" height="1"/><rect x="10" y="5" width="1" height="1"/><rect x="12" y="0" width="1" height="1"/><rect x="12" y="5" width="1" height="1"/><rect x="0" y="0" width="1" height="1"/><rect x="6" y="0" width="1" height="1"/><rect x="12" y="0" width="1" height="1"/><rect x="0" y="2" width="1" height="1"/><rect x="6" y="2" width="1" height="1"/><rect x="12" y="2" width="1" height="1"/><rect x="0" y="4" width="1" height="1"/><rect x="6" y="4" width="1" height="1"/><rect x="12" y="4" width="1" height="1"/><rect x="0" y="6" width="1" height="1"/><rect x="6" y="6" width="1" height="1"/><rect x="12" y="6" width="1" height="1"/><rect x="0" y="8" width="1" height="1"/><rect x="6" y="8" width="1" height="1"/><rect x="12" y="8" width="1" height="1"/><rect x="0" y="10" width="1" height="1"/><rect x="6" y="10" width="1" height="1"/><rect x="12" y="10" width="1" height="1"/></g><rect x="0" y="12" width="13" height="1" fill="#555"/></svg>
<svg style="position:absolute;left:216px;top:102px;" width="5" height="3" viewBox="0 0 5 3"><path d="M0 0 H5 L2.5 3 Z" fill="#666"/></svg>
<div style="position:absolute;left:229px;top:92px;width:1px;height:22px;background:#e1e1e1"></div>
<svg style="position:absolute;left:237px;top:94px;" width="17" height="17" viewBox="0 0 17 17"><path d="M2.5 7.2 L7.5 2.2 L12.8 7.5 L7.8 12.5 Z" fill="#fff" stroke="#666" stroke-width="1"/><path d="M5.5 4.5 V1.2 Q5.5 0.3 6.5 0.3 Q7.5 0.3 7.5 1.2 V6" fill="none" stroke="#666" stroke-width="1"/><path d="M13 5.5 Q16 7 15.2 11.5 Q14 10 13.5 8 Z" fill="#3f7bbd"/><rect x="0" y="13" width="16" height="4" fill="#ffff00"/></svg>
<svg style="position:absolute;left:259px;top:102px;" width="5" height="3" viewBox="0 0 5 3"><path d="M0 0 H5 L2.5 3 Z" fill="#666"/></svg>
<svg style="position:absolute;left:271px;top:95px;" width="16" height="16" viewBox="0 0 16 16"><text x="3" y="12" font-family="Liberation Sans" font-size="13.5" fill="#555">A</text><rect x="0" y="12" width="16" height="4" fill="#ff0000"/></svg>
<svg style="position:absolute;left:293px;top:102px;" width="5" height="3" viewBox="0 0 5 3"><path d="M0 0 H5 L2.5 3 Z" fill="#666"/></svg>
<svg style="position:absolute;left:315px;top:64px;" width="20" height="20" viewBox="0 0 20 20"><g fill="#666"><rect x="0" y="0" width="14" height="1"/><rect x="0" y="3" width="14" height="1"/><rect x="0" y="6" width="14" height="1"/></g></svg>
<svg style="position:absolute;left:337px;top:68px;" width="20" height="20" viewBox="0 0 20 20"><g fill="#666"><rect x="0" y="0" width="14" height="1"/><rect x="0" y="3" width="14" height="1"/><rect x="0" y="6" width="14" height="1"/></g></svg>
<div style="position:absolute;left:355px;top:61px;width:22px;height:23px;background:#9fd5b7"></div>
<svg style="position:absolute;left:359px;top:73px;" width="20" height="20" viewBox="0 0 20 20"><g fill="#666"><rect x="0" y="0" width="14" height="1"/><rect x="0" y="3" width="14" height="1"/><rect x="0" y="6" width="14" height="1"/></g></svg>
<div style="position:absolute;left:381px;top:61px;width:1px;height:22px;background:#e1e1e1"></div>
<svg style="position:absolute;left:388px;top:63px;" width="20" height="18" viewBox="0 0 20 18"><text x="0" y="0" font-family="Liberation Sans" font-size="12.5" fill="#555" stroke="#555" stroke-width="0.25" transform="translate(4.6 14.4) rotate(-45)">ab</text><path d="M7.2 15.8 L16 7" stroke="#555" stroke-width="1.1"/><path d="M17.4 5.6 L13.2 6.6 L16.4 9.8 Z" fill="#555"/></svg>
<svg style="position:absolute;left:409px;top:71px;" width="5" height="3" viewBox="0 0 5 3"><path d="M0 0 H5 L2.5 3 Z" fill="#666"/></svg>
<div style="position:absolute;left:434px;top:60px;width:1px;height:55px;background:#e1e1e1"></div>
<svg style="position:absolute;left:441px;top:63px;" width="19" height="17" viewBox="0 0 19 17"><rect x="1.5" y="1.5" width="9" height="4" fill="#fff" stroke="#666"/><rect x="1.5" y="8.5" width="9" height="7" fill="#fff" stroke="#666"/><path d="M3 3.5 H15 M3 10.5 H9 M3 12.5 H9" stroke="#3f7bbd" stroke-width="1.1"/><path d="M16.6 5.8 Q16.8 9.6 12 9.6" fill="none" stroke="#3f7bbd" stroke-width="1.3"/><path d="M13.4 7.2 L10.8 9.6 L13.4 12" fill="none" stroke="#3f7bbd" stroke-width="1.3"/></svg>
<svg style="position:absolute;left:315px;top:98px;" width="20" height="20" viewBox="0 0 20 20"><g fill="#666"><rect x="0" y="0" width="14" height="1"/><rect x="0" y="3" width="10" height="1"/><rect x="0" y="6" width="14" height="1"/><rect x="0" y="9" width="10" height="1"/></g></svg>
<svg style="position:absolute;left:337px;top:98px;" width="20" height="20" viewBox="0 0 20 20"><g fill="#666"><rect x="0" y="0" width="14" height="1"/><rect x="2" y="3" width="10" height="1"/><rect x="0" y="6" width="14" height="1"/><rect x="2" y="9" width="10" height="1"/></g></svg>
<svg style="position:absolute;left:359px;top:98px;" width="20" height="20" viewBox="0 0 20 20"><g fill="#666"><rect x="0" y="0" width="14" height="1"/><rect x="4" y="3" width="10" height="1"/><rect x="0" y="6" width="14" height="1"/><rect x="4" y="9" width="10" height="1"/></g></svg>
<div style="position:absolute;left:381px;top:92px;width:1px;height:22px;background:#e1e1e1"></div>
<svg style="position:absolute;left:389px;top:97px;" width="18" height="12" viewBox="0 0 18 12"><g fill="#666"><rect x="2" y="1" width="3" height="1"/><rect x="6" y="1" width="10" height="1"/><rect x="8" y="4" width="8" height="1"/><rect x="8" y="7" width="8" height="1"/><rect x="2" y="10" width="3" height="1"/><rect x="6" y="10" width="10" height="1"/></g><path d="M0.5 6 L4 2.8 V4.8 H7.5 V7.2 H4 V9.2 Z" fill="#3f7bbd"/></svg>
<svg style="position:absolute;left:411px;top:97px;" width="18" height="12" viewBox="0 0 18 12"><g fill="#666"><rect x="2" y="1" width="3" height="1"/><rect x="6" y="1" width="10" height="1"/><rect x="8" y="4" width="8" height="1"/><rect x="8" y="7" width="8" height="1"/><rect x="2" y="10" width="3" height="1"/><rect x="6" y="10" width="10" height="1"/></g><path d="M7.5 6 L4 2.8 V4.8 H0.5 V7.2 H4 V9.2 Z" fill="#3f7bbd"/></svg>
<svg style="position:absolute;left:441px;top:95px;" width="17" height="16" viewBox="0 0 17 16"><rect x="1.5" y="0.5" width="14" height="14" fill="none" stroke="#666"/><path d="M1.5 4.5 H15.5 M1.5 10.5 H15.5 M8.5 0.5 V4.5 M8.5 10.5 V14.5" stroke="#666"/><path d="M4 7.5 H13" stroke="#3f7bbd"/><path d="M5.5 5.5 L3.5 7.5 L5.5 9.5 M11.5 5.5 L13.5 7.5 L11.5 9.5" fill="none" stroke="#3f7bbd"/></svg>
<svg style="position:absolute;left:603px;top:102px;" width="5" height="3" viewBox="0 0 5 3"><path d="M0 0 H5 L2.5 3 Z" fill="#666"/></svg>
<svg style="position:absolute;left:745px;top:71px;" width="5" height="3" viewBox="0 0 5 3"><path d="M0 0 H5 L2.5 3 Z" fill="#666"/></svg>
<svg style="position:absolute;left:624px;top:94px;" width="19" height="18" viewBox="0 0 19 18"><rect x="1.6" y="1.6" width="14.8" height="7.8" fill="#fff" stroke="#3f7bbd" stroke-width="1.3"/><path d="M1 1 H4 Q3.6 3 1 3.4 Z M17 1 H14 Q14.4 3 17 3.4 Z M1 10 H4 Q3.6 8 1 7.6 Z" fill="#3f7bbd"/><circle cx="8.9" cy="5.4" r="1.9" fill="#3f7bbd"/><rect x="10" y="6.2" width="9" height="5" fill="#fff"/><rect x="5" y="11" width="9" height="7" fill="#fff"/><g fill="#e8b96a"><rect x="10.6" y="7" width="6.6" height="2.8" rx="1.4"/><rect x="11" y="10.3" width="6.2" height="0.9"/><rect x="12.6" y="11.6" width="3.6" height="0.9"/><rect x="11.4" y="12.9" width="5.8" height="0.9"/><rect x="12.8" y="14.1" width="3.2" height="0.9"/><rect x="5.6" y="12" width="7" height="2.8" rx="1.4"/><rect x="5.8" y="15.2" width="6.8" height="0.9"/><rect x="7.2" y="16.5" width="4" height="0.9"/></g></svg>
<svg style="position:absolute;left:647px;top:102px;" width="5" height="3" viewBox="0 0 5 3"><path d="M0 0 H5 L2.5 3 Z" fill="#666"/></svg>
<svg style="position:absolute;left:660px;top:96px;" width="16" height="14" viewBox="0 0 16 14"><text x="0.5" y="12.6" font-family="Liberation Sans" font-size="15" fill="#555" textLength="13" lengthAdjust="spacingAndGlyphs">%</text></svg>
<svg style="position:absolute;left:681px;top:97px;" width="17" height="10" viewBox="0 0 17 10"><text x="0.5" y="8.8" font-family="Liberation Sans" font-size="9.5" fill="#555" textLength="14.5" lengthAdjust="spacingAndGlyphs">000</text></svg>
<div style="position:absolute;left:704px;top:92px;width:1px;height:22px;background:#e1e1e1"></div>
<svg style="position:absolute;left:711px;top:95px;" width="17" height="16" viewBox="0 0 17 16"><path d="M1 4.6 H7.8" stroke="#3f7bbd" stroke-width="1.2"/><path d="M3.8 2 L1 4.6 L3.8 7.2" fill="none" stroke="#3f7bbd" stroke-width="1.2"/><text x="9.5" y="6" font-family="Liberation Sans" font-size="7" fill="#555">,0</text><text x="2.5" y="14.6" font-family="Liberation Sans" font-size="7" fill="#555">,00</text></svg>
<svg style="position:absolute;left:733px;top:95px;" width="17" height="16" viewBox="0 0 17 16"><path d="M1 11.6 H7.8" stroke="#3f7bbd" stroke-width="1.2"/><path d="M5 9 L7.8 11.6 L5 14.2" fill="none" stroke="#3f7bbd" stroke-width="1.2"/><text x="2.5" y="6" font-family="Liberation Sans" font-size="7" fill="#555">,00</text><text x="8.5" y="14.6" font-family="Liberation Sans" font-size="7" fill="#555">,0</text></svg>
<svg style="position:absolute;left:790px;top:58px;" width="31" height="31" viewBox="0 0 31 31"><rect x="0.5" y="0.5" width="27" height="24" fill="#fff"/><rect x="8" y="1" width="6" height="5.4" fill="#e0633a"/><rect x="8" y="7" width="11" height="5.4" fill="#3f7bbd"/><rect x="8" y="13" width="9" height="5.4" fill="#e0633a"/><rect x="8" y="19" width="3.7" height="5.4" fill="#3f7bbd"/><path d="M0.5 6.5 H27.5 M0.5 12.5 H27.5 M0.5 18.5 H27.5 M7.5 0.5 V24.5 M20.5 0.5 V24.5" stroke="#a0a0a0" stroke-width="1" fill="none"/><rect x="0.5" y="0.5" width="27" height="24" fill="none" stroke="#7a7a7a"/><rect x="13.5" y="16" width="17" height="14" fill="#fff"/><rect x="15.5" y="17.5" width="14" height="12" fill="#fff" stroke="#6b6b6b"/><path d="M18 21.5 H25 M18 24.5 H25 M23.5 19.5 L19.5 26.5" stroke="#333" stroke-width="1"/></svg>
<svg style="position:absolute;left:870px;top:59px;" width="34" height="32" viewBox="0 0 34 32"><rect x="1.5" y="1.5" width="24" height="20" fill="#fff" stroke="#888"/><rect x="7.5" y="6.5" width="18" height="15" fill="#c5d9f1"/><path d="M1.5 6.5 H25.5 M1.5 11.5 H25.5 M1.5 16.5 H25.5 M7.5 1.5 V21.5 M13.5 1.5 V21.5 M19.5 1.5 V21.5" stroke="#999" fill="none"/><rect x="1.5" y="1.5" width="24" height="20" fill="none" stroke="#7a7a7a"/><g transform="translate(0 0)"><path d="M31.2 5.6 V12.6 L25 18.8 L21.2 15 Z" fill="#6b6b6b" stroke="#fff" stroke-width="1.4" stroke-linejoin="round"/><path d="M21 15.6 L24.4 19 L22 21.4 L18.6 18 Z" fill="#6b6b6b" stroke="#fff" stroke-width="1.2"/><path d="M6.8 29.6 Q10 24 14.6 20.8 A4.2 4.2 0 1 1 20.8 26.8 Q15 29.8 6.8 29.6 Z" fill="#3f7bbd" stroke="#fff" stroke-width="1.3" stroke-linejoin="round"/><path d="M15.6 22.4 A2.6 2.6 0 0 1 19.6 25.2" fill="none" stroke="#fff" stroke-width="1.1"/></g></svg>
<svg style="position:absolute;left:967px;top:57px;" width="34" height="32" viewBox="0 0 34 32"><rect x="1.5" y="1.5" width="25" height="21" fill="#fff" stroke="#888"/><rect x="7.5" y="6.5" width="13" height="11" fill="#c5d9f1"/><path d="M1.5 6.5 H26.5 M1.5 17.5 H26.5 M7.5 1.5 V22.5 M20.5 1.5 V22.5" stroke="#999" fill="none"/><rect x="1.5" y="1.5" width="25" height="21" fill="none" stroke="#7a7a7a"/><g transform="translate(-0.5 0.5)"><path d="M31.2 5.6 V12.6 L25 18.8 L21.2 15 Z" fill="#6b6b6b" stroke="#fff" stroke-width="1.4" stroke-linejoin="round"/><path d="M21 15.6 L24.4 19 L22 21.4 L18.6 18 Z" fill="#6b6b6b" stroke="#fff" stroke-width="1.2"/><path d="M6.8 29.6 Q10 24 14.6 20.8 A4.2 4.2 0 1 1 20.8 26.8 Q15 29.8 6.8 29.6 Z" fill="#3f7bbd" stroke="#fff" stroke-width="1.3" stroke-linejoin="round"/><path d="M15.6 22.4 A2.6 2.6 0 0 1 19.6 25.2" fill="none" stroke="#fff" stroke-width="1.1"/></g></svg>
<svg style="position:absolute;left:839px;top:116px;" width="4.5" height="2.5" viewBox="0 0 4.5 2.5"><path d="M0 0 H4.5 L2.25 2.5 Z" fill="#666"/></svg>
<svg style="position:absolute;left:913.5px;top:116px;" width="4.5" height="2.5" viewBox="0 0 4.5 2.5"><path d="M0 0 H4.5 L2.25 2.5 Z" fill="#666"/></svg>
<svg style="position:absolute;left:979.5px;top:113px;" width="4.5" height="2.5" viewBox="0 0 4.5 2.5"><path d="M0 0 H4.5 L2.25 2.5 Z" fill="#666"/></svg>
<svg style="position:absolute;left:1052px;top:55px;" width="18" height="18" viewBox="0 0 18 18"><g fill="none" stroke="#666"><rect x="1.5" y="1.5" width="4" height="4"/><rect x="5.5" y="1.5" width="4" height="4"/><rect x="1.5" y="11.5" width="4" height="4"/><rect x="5.5" y="11.5" width="4" height="4"/></g><rect x="7.5" y="6.5" width="9" height="4" fill="#c5d9f1" stroke="#666"/><path d="M12 6.5 V10.5" stroke="#666"/><path d="M1 8.5 H7" stroke="#3f7bbd" stroke-width="1.6"/><path d="M3.5 6 L1 8.5 L3.5 11" fill="none" stroke="#3f7bbd" stroke-width="1.4"/></svg>
<svg style="position:absolute;left:1129px;top:64px;" width="5" height="3" viewBox="0 0 5 3"><path d="M0 0 H5 L2.5 3 Z" fill="#666"/></svg>
<svg style="position:absolute;left:1052px;top:78px;" width="18" height="18" viewBox="0 0 18 18"><g fill="none" stroke="#666"><rect x="1.5" y="1.5" width="4" height="4"/><rect x="5.5" y="1.5" width="4" height="4"/><rect x="1.5" y="11.5" width="4" height="4"/><rect x="5.5" y="11.5" width="4" height="4"/></g><rect x="4.5" y="6.5" width="5" height="4" fill="#c5d9f1" stroke="#666"/><path d="M10 5.5 L16 11.5 M16 5.5 L10 11.5" stroke="#e0633a" stroke-width="1.5"/></svg>
<svg style="position:absolute;left:1126px;top:87px;" width="5" height="3" viewBox="0 0 5 3"><path d="M0 0 H5 L2.5 3 Z" fill="#666"/></svg>
<svg style="position:absolute;left:1052px;top:101px;" width="18" height="18" viewBox="0 0 18 18"><path d="M1.5 1 V4 M15.5 1 V4 M2 2.5 H15" stroke="#3f7bbd" stroke-width="1"/><path d="M4 1 L2 2.5 L4 4 M13 1 L15 2.5 L13 4" fill="none" stroke="#3f7bbd" stroke-width="0.9"/><rect x="1.5" y="5.5" width="14" height="11" fill="#fff" stroke="#777"/><path d="M1.5 8.5 H15.5 M1.5 11.5 H15.5 M1.5 14.5 H15.5 M5 5.5 V16.5 M8.5 5.5 V16.5 M12 5.5 V16.5" stroke="#aaa"/><rect x="5" y="9" width="4" height="3" fill="#3f7bbd"/></svg>
<svg style="position:absolute;left:1113px;top:109.5px;" width="5" height="2.5" viewBox="0 0 5 2.5"><path d="M0 0 H5 L2.5 2.5 Z" fill="#666"/></svg>
<svg style="position:absolute;left:1150px;top:55px;" width="18" height="17" viewBox="0 0 18 17"><path d="M16 2.3 H3.2 L8.8 8.5 L3.2 14.6 H16" fill="none" stroke="#444" stroke-width="2.2" stroke-linejoin="miter" stroke-miterlimit="4"/><path d="M15 1.2 H16.2 V4 M15 15.7 H16.2 V13" fill="none" stroke="#444" stroke-width="1"/></svg>
<svg style="position:absolute;left:1173px;top:63.5px;" width="5" height="3" viewBox="0 0 5 3"><path d="M0 0 H5 L2.5 3 Z" fill="#666"/></svg>
<svg style="position:absolute;left:1151px;top:78px;" width="16" height="18" viewBox="0 0 16 18"><rect x="1.5" y="1.5" width="13" height="15" fill="#fff" stroke="#666"/><rect x="1" y="1" width="14" height="3" fill="#777"/><path d="M8 5.8 V12" stroke="#3f7bbd" stroke-width="2.2"/><path d="M4.2 10 L8 14.4 L11.8 10 Z" fill="#3f7bbd"/></svg>
<svg style="position:absolute;left:1171px;top:86.5px;" width="5" height="3" viewBox="0 0 5 3"><path d="M0 0 H5 L2.5 3 Z" fill="#666"/></svg>
<svg style="position:absolute;left:1151px;top:102px;" width="17" height="15" viewBox="0 0 17 15"><path d="M6.6 3.6 L9.8 0.6 Q10.6 0 11.3 0.7 L13.6 3 Q14.3 3.7 13.6 4.5 L8 10.2 L4 6.2 Z" fill="#e07a94"/><path d="M3.4 6.8 L7.4 10.8 L5.8 12.4 Q5 13.1 4.2 12.4 L1.6 9.8 Q0.9 9 1.6 8.4 Z" fill="#eca3b5"/><path d="M6.5 13.5 H15" stroke="#666" stroke-width="1"/></svg>
<svg style="position:absolute;left:1171px;top:109px;" width="5" height="3" viewBox="0 0 5 3"><path d="M0 0 H5 L2.5 3 Z" fill="#666"/></svg>
<svg style="position:absolute;left:1205px;top:58px;" width="32" height="28" viewBox="0 0 32 28"><text x="1" y="12.8" font-family="Liberation Sans" font-weight="bold" font-size="17" fill="#3f7bbd" textLength="11.2" lengthAdjust="spacingAndGlyphs">A</text><text x="2" y="27" font-family="Liberation Sans" font-weight="bold" font-size="17" fill="#9b59c6" textLength="9.4" lengthAdjust="spacingAndGlyphs">Z</text><path d="M13 8 H30.2 L23 15.6 V22.8 H19.9 V15.6 Z" fill="#6b6b6b"/><path d="M15.2 9.3 L20.9 15.2 V21.8 H22 V15.4" fill="none" stroke="#fff" stroke-width="0.9"/></svg>
<svg style="position:absolute;left:1280px;top:59px;" width="28" height="25" viewBox="0 0 28 25"><g fill="#6b6b6b"><rect x="7.3" y="1" width="3.3" height="3.6"/><rect x="5.3" y="4.4" width="6.5" height="5.5"/><rect x="3.5" y="9.7" width="8.3" height="3.9"/><rect x="1.1" y="13.4" width="10.7" height="10.3"/><rect x="17.1" y="1" width="3.3" height="3.6"/><rect x="15.9" y="4.4" width="7" height="5.5"/><rect x="15.9" y="9.7" width="8.7" height="3.9"/><rect x="15.9" y="13.4" width="11.1" height="10.3"/><rect x="11.5" y="9.7" width="4.7" height="4"/></g><g stroke="#fff" stroke-width="0.9" fill="none"><path d="M2.3 14.5 V22.6 M4.6 10.6 V13.4 M6.4 5.4 V9.7 M8.4 2 V4.4 M25.9 14.5 V22.6 M23.5 10.6 V13.4 M21.8 5.4 V9.7 M19.3 2 V4.4 M12.8 11.7 H15"/></g></svg>
<svg style="position:absolute;left:1237px;top:113px;" width="4.5" height="2.5" viewBox="0 0 4.5 2.5"><path d="M0 0 H4.5 L2.25 2.5 Z" fill="#666"/></svg>
<svg style="position:absolute;left:1322.5px;top:113px;" width="4.5" height="2.5" viewBox="0 0 4.5 2.5"><path d="M0 0 H4.5 L2.25 2.5 Z" fill="#666"/></svg>
<svg style="position:absolute;left:1346px;top:130px;" width="11" height="8" viewBox="0 0 11 8"><path d="M1 6.5 L5.5 2 L10 6.5" fill="none" stroke="#666" stroke-width="2"/></svg>
<svg style="position:absolute;left:93px;top:163px;" width="7" height="4" viewBox="0 0 7 4"><path d="M0 0 H7 L3.5 4 Z" fill="#666"/></svg>
<div style="position:absolute;left:121px;top:162px;width:2px;height:2px;background:#999"></div>
<div style="position:absolute;left:121px;top:166px;width:2px;height:2px;background:#999"></div>
<div style="position:absolute;left:121px;top:170px;width:2px;height:2px;background:#999"></div>
<svg style="position:absolute;left:146px;top:158px;" width="19" height="17" viewBox="0 0 19 17"><path d="M2 15.5 Q6 9 17 1.5 M3 1.5 Q10 8 16.5 15.5" fill="none" stroke="#c8c8c8" stroke-width="2.3" stroke-linecap="round"/></svg>
<svg style="position:absolute;left:182px;top:158px;" width="21" height="17" viewBox="0 0 21 17"><path d="M1.5 9 L7 14.5 Q11 7 19.5 1.5" fill="none" stroke="#c8c8c8" stroke-width="3" stroke-linejoin="round"/></svg>
<svg style="position:absolute;left:216px;top:154px;" width="23" height="24" viewBox="0 0 23 24"><g fill="none" stroke="#6a6a6a" stroke-linecap="round"><path d="M15.8 2.6 Q15 1.2 13.4 1.6 Q11.2 2.2 10.5 6 L8.4 18.6 Q7.8 21.6 5.2 21.6" stroke-width="2.1"/><path d="M6.4 8.3 H14" stroke-width="1.1"/><path d="M12.2 11.8 Q13.8 10.6 14.8 13 L16.6 17 Q17.4 18.6 19.2 17.6" stroke-width="1.4"/><path d="M19.4 11.4 Q18.4 11.6 16.8 13.8 L14.6 17 Q13.8 18.4 12.2 18" stroke-width="1.1"/></g><g fill="#6a6a6a"><circle cx="15.6" cy="3.3" r="1.5"/><circle cx="3.6" cy="20.3" r="1.6"/><circle cx="19.4" cy="11.6" r="1"/><circle cx="12.6" cy="17.9" r="1.1"/></g></svg>
<svg style="position:absolute;left:1346px;top:163px;" width="13" height="10" viewBox="0 0 13 10"><path d="M1.5 1.5 L6.5 6.5 L11.5 1.5" fill="none" stroke="#666" stroke-width="2.6"/></svg>
<div style="position:absolute;left:1348px;top:223px;width:15px;height:441px;background:#f1f1f1"></div>
<div style="position:absolute;left:1348px;top:191px;width:15px;height:15px;box-sizing:border-box;border:1px solid #ababab;background:#fff"></div>
<svg style="position:absolute;left:1351px;top:196px;" width="9" height="5" viewBox="0 0 9 5"><path d="M0.5 4.5 H8.5 L4.5 0.5 Z" fill="#777"/></svg>
<div style="position:absolute;left:1348px;top:206px;width:15px;height:17px;box-sizing:border-box;border:1px solid #ababab;background:#fff"></div>
<div style="position:absolute;left:0px;top:678px;width:1366px;height:28px;background:#f5f5f5"></div>
<div style="position:absolute;left:0px;top:678px;width:1345px;height:1px;background:#ababab"></div>
<div style="position:absolute;left:836px;top:679px;width:509px;height:27px;background:#f5f5f5"></div>
<div style="position:absolute;left:851px;top:685px;width:479px;height:15px;background:#e8e8e8"></div>
<div style="position:absolute;left:836px;top:685px;width:15px;height:15px;box-sizing:border-box;border:1px solid #ababab;background:#fff"></div>
<svg style="position:absolute;left:840px;top:689px;" width="5" height="8" viewBox="0 0 5 8"><path d="M4.5 0 V8 L0.5 4 Z" fill="#777"/></svg>
<div style="position:absolute;left:851px;top:685px;width:209px;height:15px;box-sizing:border-box;border:1px solid #ababab;background:#fff"></div>
<div style="position:absolute;left:1330px;top:685px;width:15px;height:15px;box-sizing:border-box;border:1px solid #ababab;background:#fff"></div>
<svg style="position:absolute;left:1335px;top:689px;" width="5" height="8" viewBox="0 0 5 8"><path d="M0.5 0 V8 L4.5 4 Z" fill="#777"/></svg>
<div style="position:absolute;left:1345px;top:678px;width:21px;height:3px;background:#fff"></div>
<div style="position:absolute;left:1348px;top:664px;width:15px;height:15px;box-sizing:border-box;border:1px solid #ababab;background:#fff"></div>
<svg style="position:absolute;left:1351px;top:669px;" width="9" height="5" viewBox="0 0 9 5"><path d="M0.5 0.5 H8.5 L4.5 4.5 Z" fill="#777"/></svg>
<svg style="position:absolute;left:26px;top:687px;" width="6" height="9" viewBox="0 0 6 9"><path d="M5.2 0.5 V8.5 L0.8 4.5 Z" fill="#c6c6c6"/></svg>
<svg style="position:absolute;left:55px;top:687px;" width="6" height="9" viewBox="0 0 6 9"><path d="M0.8 0.5 V8.5 L5.2 4.5 Z" fill="#1e6b3c"/></svg>
<div style="position:absolute;left:100px;top:678px;width:137px;height:25px;background:#fff"></div>
<div style="position:absolute;left:100px;top:678px;width:1px;height:24px;background:#ababab"></div>
<div style="position:absolute;left:236px;top:678px;width:1px;height:24px;background:#ababab"></div>
<div style="position:absolute;left:103px;top:682px;width:131px;height:18px;background:linear-gradient(to bottom,#ffffff 0%,#dfe3ee 45%,#a3aecb 100%)"></div>
<div style="position:absolute;left:100px;top:701px;width:137px;height:2px;background:#217346"></div>
<div class="t" style="left:111.74px;top:685.00px;font-size:13px;line-height:13px;color:#217346;font-weight:bold;transform:scaleX(1.0153);transform-origin:left 0;">Projektcontrolling</div>
<div style="position:absolute;left:239px;top:681px;width:97px;height:22px;background:#bdd7ee"></div>
<div class="t" style="left:250.22px;top:686.00px;font-size:12.8px;line-height:12.8px;color:#222;transform:scaleX(1.0080);transform-origin:left 0;">Stammdaten</div>
<div style="position:absolute;left:339px;top:681px;width:1px;height:22px;background:#bcbcbc"></div>
<div style="position:absolute;left:341px;top:681px;width:128px;height:22px;background:#808080"></div>
<div class="t" style="left:352.53px;top:686.00px;font-size:12.8px;line-height:12.8px;color:#f2f2f2;transform:scaleX(1.0434);transform-origin:left 0;">Projekt Reporting</div>
<div style="position:absolute;left:471px;top:681px;width:1px;height:22px;background:#bcbcbc"></div>
<div style="position:absolute;left:474px;top:681px;width:192px;height:22px;background:#404040"></div>
<div class="t" style="left:491.50px;top:686.00px;font-size:12.8px;line-height:12.8px;color:#f2f2f2;transform:scaleX(1.0096);transform-origin:left 0;">Wirtschaftlichkeitsrechnung</div>
<div style="position:absolute;left:668px;top:681px;width:1px;height:22px;background:#bcbcbc"></div>
<div style="position:absolute;left:671px;top:681px;width:79px;height:22px;background:#000;overflow:hidden">
<div class="t" style="left:11.26px;top:5.00px;font-size:12.8px;line-height:12.8px;color:#f2f2f2;transform:scaleX(1.1114);transform-origin:left 0;">Kurzanleitung</div>
</div>
<div style="position:absolute;left:759.5px;top:694.5px;width:2px;height:2px;background:#1e6b3c"></div>
<div style="position:absolute;left:763.5px;top:694.5px;width:2px;height:2px;background:#1e6b3c"></div>
<div style="position:absolute;left:767.5px;top:694.5px;width:2px;height:2px;background:#1e6b3c"></div>
<svg style="position:absolute;left:782px;top:683px;" width="18" height="18" viewBox="0 0 18 18"><circle cx="9" cy="9" r="7.6" fill="none" stroke="#777" stroke-width="1.3"/><path d="M9 4.8 V13.2 M4.8 9 H13.2" stroke="#777" stroke-width="1.8"/></svg>
<div style="position:absolute;left:819px;top:687px;width:2px;height:2px;background:#c0c0c0"></div>
<div style="position:absolute;left:819px;top:691px;width:2px;height:2px;background:#c0c0c0"></div>
<div style="position:absolute;left:819px;top:695px;width:2px;height:2px;background:#c0c0c0"></div>
<div style="position:absolute;left:0px;top:706px;width:1366px;height:22px;background:#217346"></div>
<div class="t" style="left:6.94px;top:711.00px;font-size:12px;line-height:12px;color:#fff;transform:scaleX(0.7906);transform-origin:left 0;">BEREIT</div>
<svg style="position:absolute;left:61px;top:710px;" width="15" height="14" viewBox="0 0 15 14"><circle cx="2.9" cy="2.9" r="2.9" fill="#e6eee8"/><path d="M1.4 6.6 V12.4 H12.4 V1.6 H7.6" fill="none" stroke="#fff" stroke-width="1.2"/><rect x="7" y="1" width="6" height="3" fill="#f4f7f5"/><g fill="#fff"><rect x="6.6" y="5.8" width="1.9" height="1.1"/><rect x="9.6" y="5.8" width="1.9" height="1.1"/><rect x="3.6" y="7.8" width="1.9" height="1.1"/><rect x="6.6" y="7.8" width="1.9" height="1.1"/><rect x="9.6" y="7.8" width="1.9" height="1.1"/><rect x="3.6" y="9.8" width="1.9" height="1.1"/><rect x="6.6" y="9.8" width="1.9" height="1.1"/><rect x="9.6" y="9.8" width="1.9" height="1.1"/></g></svg>
<div style="position:absolute;left:1074px;top:706px;width:38px;height:22px;background:#0e6433"></div>
<svg style="position:absolute;left:1086px;top:710px;" width="14" height="14" viewBox="0 0 14 14"><path d="M0.5 0.5 H12.5 V12.5 H0.5 Z M4.5 0.5 V12.5 M8.5 0.5 V12.5 M0.5 4.5 H12.5 M0.5 8.5 H12.5" fill="none" stroke="#fff" stroke-width="1"/></svg>
<svg style="position:absolute;left:1124px;top:710px;" width="15" height="14" viewBox="0 0 15 14"><rect x="0.5" y="0.5" width="13" height="12" fill="none" stroke="#fff"/><rect x="3.5" y="2.5" width="7" height="8" fill="none" stroke="#fff"/><path d="M5 4.5 H9 M5 6.5 H9 M5 8.5 H9" stroke="#fff"/></svg>
<svg style="position:absolute;left:1162px;top:710px;" width="15" height="14" viewBox="0 0 15 14"><rect x="0.5" y="0.5" width="13" height="12" fill="none" stroke="#fff"/><rect x="2" y="1" width="3" height="6" fill="#fff"/><rect x="6" y="1" width="3" height="4.5" fill="#fff"/></svg>
<div style="position:absolute;left:1193px;top:716px;width:6px;height:2px;background:#fff"></div>
<div style="position:absolute;left:1203px;top:716px;width:100px;height:1px;background:#fff"></div>
<div style="position:absolute;left:1253px;top:711px;width:4px;height:11px;background:#fff"></div>
<div style="position:absolute;left:1307px;top:715.5px;width:8px;height:2px;background:#fff"></div>
<div style="position:absolute;left:1310px;top:712.5px;width:2px;height:8px;background:#fff"></div>
<div class="t" style="left:1331.20px;top:710.00px;font-size:12px;line-height:12px;color:#fff;transform:scaleX(0.8877);transform-origin:left 0;">110%</div>
</body></html>
